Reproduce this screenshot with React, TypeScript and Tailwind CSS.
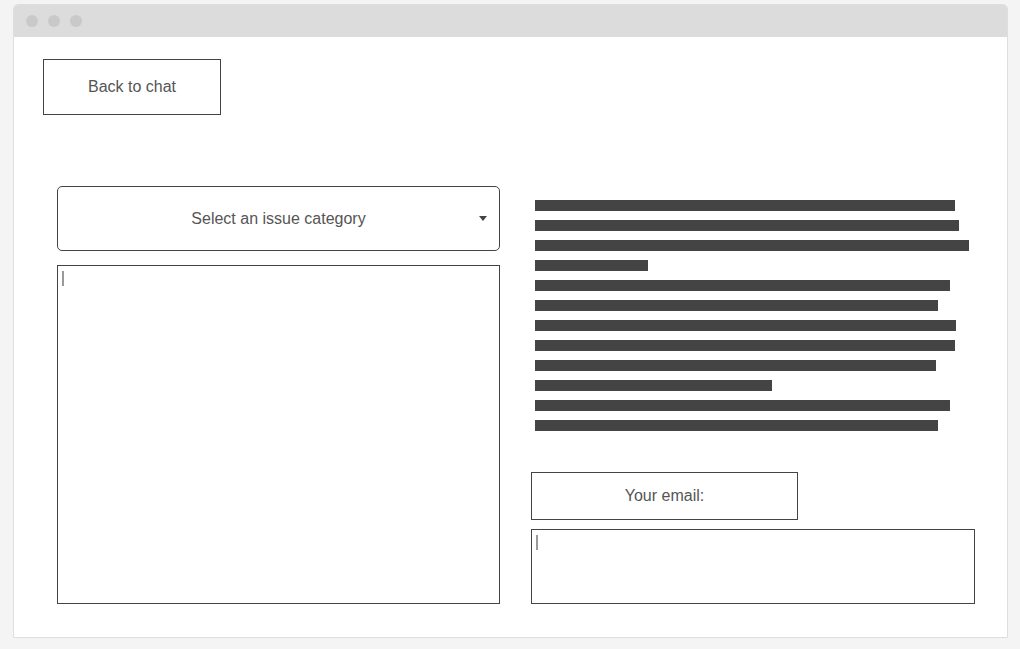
import React from "react";

const bars = [420, 424, 434, 113, 415, 403, 421, 420, 401, 237, 415, 403];

export default function App() {
  return (
    <div
      className="w-[1020px] h-[649px] bg-[#f4f4f4] pt-[4px] pl-[13px] overflow-hidden"
      style={{ fontFamily: '"Liberation Sans", Arial, sans-serif' }}
    >
      <div className="w-[995px] h-[634px] bg-white border border-[#dedede] rounded-t-[5px] overflow-hidden flex flex-col">
        <div className="h-[32px] bg-[#dcdcdc] flex items-center gap-[10px] pl-[12px] shrink-0">
          <span className="w-[12px] h-[12px] rounded-full bg-[#c9c9c9]" />
          <span className="w-[12px] h-[12px] rounded-full bg-[#c9c9c9]" />
          <span className="w-[12px] h-[12px] rounded-full bg-[#c9c9c9]" />
        </div>
        <div className="flex flex-col pl-[29px] pt-[22px]">
          <button className="w-[178px] h-[56px] border border-[#444] flex items-center justify-center text-[16px] text-[#555] bg-white">
            Back to chat
          </button>
          <div className="flex items-start gap-[31px] ml-[14px] mt-[71px]">
            <div className="w-[443px] flex flex-col gap-[14px]">
              <div className="relative h-[65px] border border-[#444] rounded-[5px] flex items-center justify-center text-[16px] text-[#555]">
                Select an issue category
                <span className="absolute right-[12px] top-[29px] w-0 h-0 border-l-[4px] border-r-[4px] border-t-[5px] border-l-transparent border-r-transparent border-t-[#444]" />
              </div>
              <div className="h-[339px] border border-[#444] pl-[4px] pt-[5px]">
                <div className="w-[2px] h-[15px] bg-[#999]" />
              </div>
            </div>
            <div className="w-[444px] flex flex-col">
              <div className="flex flex-col gap-[9px] pl-[4px] pt-[14px]">
                {bars.map((w, i) => (
                  <div key={i} className="h-[11px] bg-[#444]" style={{ width: w }} />
                ))}
              </div>
              <div className="mt-[41px] w-[267px] h-[48px] border border-[#444] flex items-center justify-center text-[16px] text-[#555]">
                Your email:
              </div>
              <div className="mt-[9px] h-[75px] border border-[#444] pl-[4px] pt-[5px]">
                <div className="w-[2px] h-[15px] bg-[#999]" />
              </div>
            </div>
          </div>
        </div>
      </div>
    </div>
  );
}
